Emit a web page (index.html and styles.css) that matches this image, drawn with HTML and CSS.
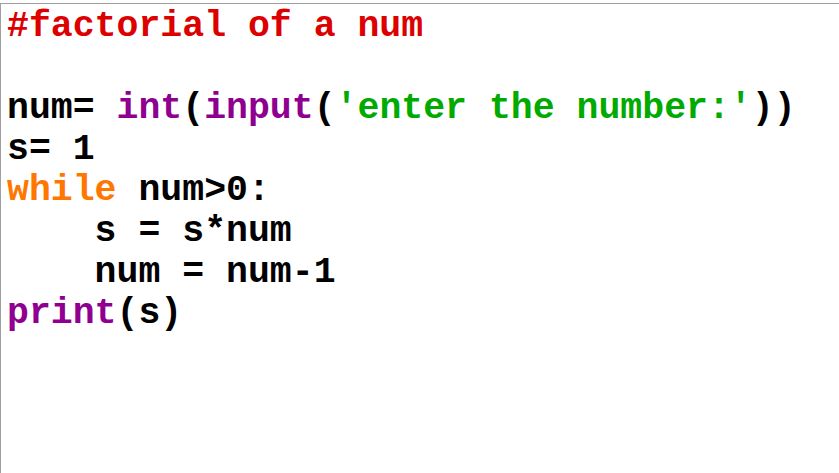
FILE: index.html
```html
<!DOCTYPE html>
<html>
<head>
<meta charset="utf-8">
<link rel="stylesheet" href="styles.css">
</head>
<body>
<div class="editor">
<pre class="code"><span class="cm">#factorial of a num</span>

num= <span class="bi">int</span>(<span class="bi">input</span>(<span class="st">'enter the number:'</span>))
s= 1
<span class="kw">while</span> num&gt;0:
    s = s*num
    num = num-1
<span class="bi">print</span>(s)</pre>
</div>
</body>
</html>
```
FILE: styles.css
```css
html, body {
  margin: 0;
  padding: 0;
  background: #ffffff;
}
.editor {
  margin-top: 3px;
  height: 470px;
  box-sizing: border-box;
  border-top: 1px solid #a0a0a0;
  border-left: 1px solid #a0a0a0;
  padding: 2px 0 0 6px;
  background: #ffffff;
}
.code {
  margin: 0;
  font-family: "Courier New", "Nimbus Mono PS", "FreeMono", "Liberation Mono", monospace;
  font-weight: bold;
  font-size: 36.5px;
  line-height: 41px;
  color: #000000;
}
.cm { color: #dd0000; }
.kw { color: #ff7700; }
.bi { color: #900090; }
.st { color: #00aa00; }
```
